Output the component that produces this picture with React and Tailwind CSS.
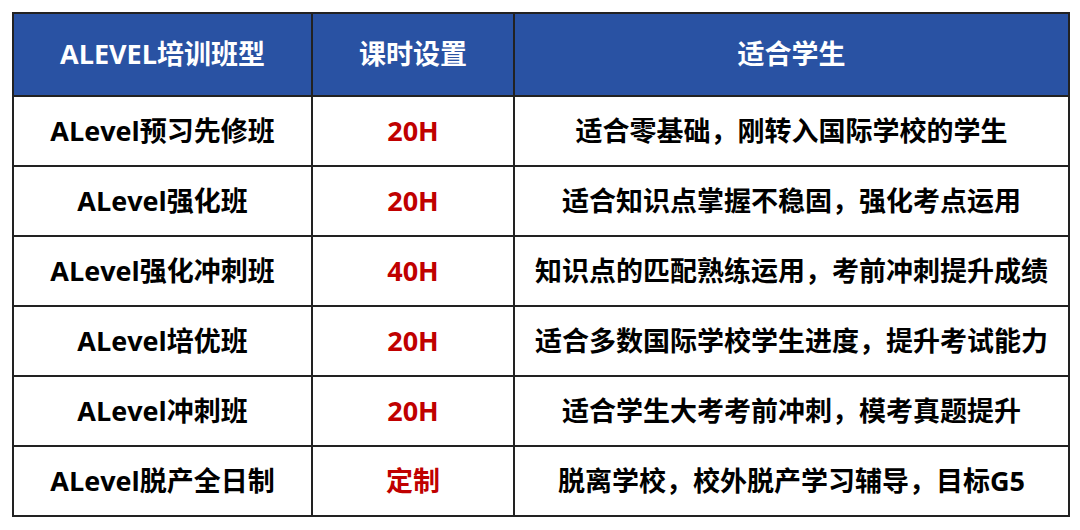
import React from "react";

const rows = [
  ["ALevel预习先修班", "20H", "适合零基础，刚转入国际学校的学生"],
  ["ALevel强化班", "20H", "适合知识点掌握不稳固，强化考点运用"],
  ["ALevel强化冲刺班", "40H", "知识点的匹配熟练运用，考前冲刺提升成绩"],
  ["ALevel培优班", "20H", "适合多数国际学校学生进度，提升考试能力"],
  ["ALevel冲刺班", "20H", "适合学生大考考前冲刺，模考真题提升"],
  ["ALevel脱产全日制", "定制", "脱离学校，校外脱产学习辅导，目标G5"],
];

export default function App() {
  return (
    <div
      className="w-[1080px] h-[530px] bg-white pl-[12px] pt-[12px]"
      style={{ fontFamily: '"Open Sans", "Noto Sans CJK SC", sans-serif' }}
    >
      <table className="border-collapse border-2 border-[#222] w-[1056px] table-fixed">
        <colgroup>
          <col className="w-[299px]" />
          <col className="w-[202px]" />
          <col className="w-[555px]" />
        </colgroup>
        <thead>
          <tr className="h-[83px] bg-[#2952a3] text-white text-[27px] font-bold">
            <th className="border-2 border-[#222]">ALEVEL培训班型</th>
            <th className="border-2 border-[#222]">课时设置</th>
            <th className="border-2 border-[#222]">适合学生</th>
          </tr>
        </thead>
        <tbody>
          {rows.map((r) => (
            <tr key={r[0]} className="h-[70px] text-[27px] font-bold text-black">
              <td className="border-2 border-[#222] text-center">{r[0]}</td>
              <td className="border-2 border-[#222] text-center text-[#c00000]">{r[1]}</td>
              <td className="border-2 border-[#222] text-center">{r[2]}</td>
            </tr>
          ))}
        </tbody>
      </table>
    </div>
  );
}
